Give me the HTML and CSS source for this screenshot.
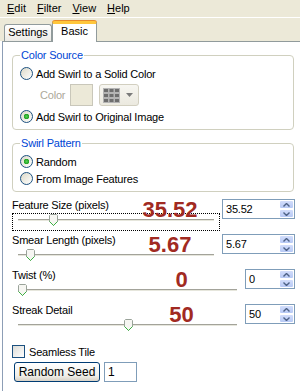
FILE: index.html
```html
<!DOCTYPE html>
<html lang="en">

<head>
    <meta charset="UTF-8">
    <meta name="viewport" content="width=device-width, initial-scale=1.0">
    <title>Swirl</title>
    <link rel="stylesheet" href="styles.css">
</head>

<body>
    <div class="window">
        <!-- 菜单 -->
        <div class="menubar">
            <span class="menu"><u>E</u>dit</span>
            <span class="menu"><u>F</u>ilter</span>
            <span class="menu"><u>V</u>iew</span>
            <span class="menu"><u>H</u>elp</span>
        </div>

        <!-- 选项卡 -->
        <div class="tabs">
            <div class="tab">Settings</div>
            <div class="tab tab-active">Basic</div>
        </div>

        <div class="panel">
            <fieldset class="group">
                <legend>Color Source</legend>
                <div class="radio"><span class="radio-box"></span>Add Swirl to a Solid Color</div>
                <div class="color-row">
                    <span class="color-label">Color</span>
                    <span class="swatch"></span>
                    <span class="picker">
                        <svg width="17" height="15" viewBox="0 0 17 15">
                            <rect width="17" height="15" fill="#b4b4b4" />
                            <rect x="1" y="1" width="4" height="3" fill="#6e6e6e" />
                            <rect x="6.5" y="1" width="4" height="3" fill="#6e6e6e" />
                            <rect x="12" y="1" width="4" height="3" fill="#6e6e6e" />
                            <rect x="1" y="6" width="4" height="3" fill="#6e6e6e" />
                            <rect x="6.5" y="6" width="4" height="3" fill="#6e6e6e" />
                            <rect x="12" y="6" width="4" height="3" fill="#6e6e6e" />
                            <rect x="1" y="11" width="4" height="3" fill="#6e6e6e" />
                            <rect x="6.5" y="11" width="4" height="3" fill="#6e6e6e" />
                            <rect x="12" y="11" width="4" height="3" fill="#6e6e6e" />
                        </svg>
                        <svg width="7" height="4" viewBox="0 0 7 4">
                            <path d="M0 0h7l-3.5 4z" fill="#7a7a7a" />
                        </svg>
                    </span>
                </div>
                <div class="radio"><span class="radio-box checked"></span>Add Swirl to Original Image</div>
            </fieldset>

            <fieldset class="group group-pattern">
                <legend>Swirl Pattern</legend>
                <div class="radio"><span class="radio-box checked"></span>Random</div>
                <div class="radio"><span class="radio-box"></span>From Image Features</div>
            </fieldset>

            <!-- 滑块 -->
            <div class="sliders">
                <div class="slider-row">
                    <div class="slider-area">
                        <div class="slider-label">Feature Size (pixels)</div>
                        <div class="slider focused">
                            <div class="track"></div>
                            <svg class="thumb" style="--pos:0.165" width="9" height="12" viewBox="0 0 9 12">
                                <path d="M1.5 .5h6l1 1v6l-4 4-4-4v-6z" fill="#f6f6f2" stroke="#9aa39a" />
                                <path d="M.5 7.5l4 4 4-4" fill="none" stroke="#3cb043" />
                            </svg>
                        </div>
                        <div class="big-value">35.52</div>
                    </div>
                    <div class="spin spin-wide">
                        <span class="spin-text">35.52</span>
                        <span class="spin-btns">
                            <span class="spin-btn"><svg width="7" height="4" viewBox="0 0 7 4"><path d="M.5 3.5l3-3 3 3" fill="none" stroke="#4d6185" stroke-width="1.4" /></svg></span>
                            <span class="spin-btn"><svg width="7" height="4" viewBox="0 0 7 4"><path d="M.5 .5l3 3 3-3" fill="none" stroke="#4d6185" stroke-width="1.4" /></svg></span>
                        </span>
                    </div>
                </div>

                <div class="slider-row">
                    <div class="slider-area">
                        <div class="slider-label">Smear Length (pixels)</div>
                        <div class="slider">
                            <div class="track"></div>
                            <svg class="thumb" style="--pos:0.043" width="9" height="12" viewBox="0 0 9 12">
                                <path d="M1.5 .5h6l1 1v6l-4 4-4-4v-6z" fill="#f6f6f2" stroke="#9aa39a" />
                                <path d="M.5 7.5l4 4 4-4" fill="none" stroke="#3cb043" />
                            </svg>
                        </div>
                        <div class="big-value">5.67</div>
                    </div>
                    <div class="spin spin-wide">
                        <span class="spin-text">5.67</span>
                        <span class="spin-btns">
                            <span class="spin-btn"><svg width="7" height="4" viewBox="0 0 7 4"><path d="M.5 3.5l3-3 3 3" fill="none" stroke="#4d6185" stroke-width="1.4" /></svg></span>
                            <span class="spin-btn"><svg width="7" height="4" viewBox="0 0 7 4"><path d="M.5 .5l3 3 3-3" fill="none" stroke="#4d6185" stroke-width="1.4" /></svg></span>
                        </span>
                    </div>
                </div>

                <div class="slider-row">
                    <div class="slider-area">
                        <div class="slider-label">Twist (%)</div>
                        <div class="slider">
                            <div class="track"></div>
                            <svg class="thumb" style="--pos:0" width="9" height="12" viewBox="0 0 9 12">
                                <path d="M1.5 .5h6l1 1v6l-4 4-4-4v-6z" fill="#f6f6f2" stroke="#9aa39a" />
                                <path d="M.5 7.5l4 4 4-4" fill="none" stroke="#3cb043" />
                            </svg>
                        </div>
                        <div class="big-value">0</div>
                    </div>
                    <div class="spin spin-narrow">
                        <span class="spin-text">0</span>
                        <span class="spin-btns">
                            <span class="spin-btn"><svg width="7" height="4" viewBox="0 0 7 4"><path d="M.5 3.5l3-3 3 3" fill="none" stroke="#4d6185" stroke-width="1.4" /></svg></span>
                            <span class="spin-btn"><svg width="7" height="4" viewBox="0 0 7 4"><path d="M.5 .5l3 3 3-3" fill="none" stroke="#4d6185" stroke-width="1.4" /></svg></span>
                        </span>
                    </div>
                </div>

                <div class="slider-row">
                    <div class="slider-area">
                        <div class="slider-label">Streak Detail</div>
                        <div class="slider">
                            <div class="track"></div>
                            <svg class="thumb" style="--pos:0.505" width="9" height="12" viewBox="0 0 9 12">
                                <path d="M1.5 .5h6l1 1v6l-4 4-4-4v-6z" fill="#f6f6f2" stroke="#9aa39a" />
                                <path d="M.5 7.5l4 4 4-4" fill="none" stroke="#3cb043" />
                            </svg>
                        </div>
                        <div class="big-value">50</div>
                    </div>
                    <div class="spin spin-narrow">
                        <span class="spin-text">50</span>
                        <span class="spin-btns">
                            <span class="spin-btn"><svg width="7" height="4" viewBox="0 0 7 4"><path d="M.5 3.5l3-3 3 3" fill="none" stroke="#4d6185" stroke-width="1.4" /></svg></span>
                            <span class="spin-btn"><svg width="7" height="4" viewBox="0 0 7 4"><path d="M.5 .5l3 3 3-3" fill="none" stroke="#4d6185" stroke-width="1.4" /></svg></span>
                        </span>
                    </div>
                </div>
            </div>

            <div class="check"><span class="check-box"></span>Seamless Tile</div>
            <div class="seed-row">
                <span class="button">Random Seed</span>
                <span class="textbox">1</span>
            </div>
        </div>
    </div>
</body>

</html>
```

FILE: styles.css
```css
* {
    box-sizing: border-box;
}

html,
body {
    margin: 0;
    padding: 0;
}

body {
    width: 300px;
    height: 392px;
    overflow: hidden;
    background: #fff;
    font-family: "Liberation Sans", Arial, sans-serif;
    font-size: 11px;
    letter-spacing: -0.2px;
    color: #000;
}

/* 菜单 */
.menubar {
    height: 18px;
    display: flex;
    padding-left: 1.5px;
    background: #ece9d8;
    border-bottom: 1px solid #fff;
    line-height: 17px;
    letter-spacing: 0;
}

.menu {
    padding: 0 5.5px;
}

/* 选项卡 */
.tabs {
    height: 23px;
    display: flex;
    align-items: flex-end;
    padding-left: 4px;
    background: #ece9d8;
}

.tab {
    width: 48px;
    height: 17px;
    text-align: center;
    line-height: 15px;
    border: 1px solid #919b9c;
    border-bottom: 0;
    border-radius: 3px 3px 0 0;
    background: linear-gradient(#fff, #ecebe6);
    letter-spacing: 0;
}

.tab-active {
    position: relative;
    width: 45px;
    height: 21px;
    margin-bottom: -1px;
    background: #fff;
    border-top: 3px solid #ffc73c;
    box-shadow: 0 -1px 0 #e68b2c;
    line-height: 15px;
}

.panel {
    margin-left: 2px;
    padding: 7px 5px 0 9px;
    border-top: 1px solid #919b9c;
    border-left: 1px solid #8d9eb6;
    height: 350px;
}

/* 分组框 */
.group {
    margin: 0 1px 0 0;
    padding: 3px 0 4px 7px;
    min-width: 0;
    border: 1px solid #d0d0bf;
    border-radius: 4px;
}

.group legend {
    padding: 0 1px;
    color: #0046d5;
    line-height: 13px;
}

.group-pattern {
    margin-top: 7px;
}

.radio,
.check {
    height: 17px;
    display: flex;
    align-items: center;
    gap: 3px;
}

.radio-box {
    width: 13px;
    height: 13px;
    border: 1px solid #1c5180;
    border-radius: 50%;
    background: linear-gradient(135deg, #dcd9c8, #fff);
}

.radio-box.checked {
    background: radial-gradient(circle, #55d155 0, #21a121 2.5px, transparent 3px),
        linear-gradient(135deg, #dcd9c8, #fff);
}

.color-row {
    height: 22px;
    margin: 2px 0;
    display: flex;
    align-items: center;
    padding-left: 20px;
}

.color-label {
    width: 30px;
    color: #aca899;
}

.swatch {
    width: 23px;
    height: 22px;
    border: 1px solid #c9c7ba;
    background: #ece9d8;
}

.picker {
    width: 40px;
    height: 22px;
    margin-left: 6px;
    display: flex;
    align-items: center;
    gap: 6px;
    padding-left: 3px;
    border: 1px solid #d2cfc0;
    border-radius: 3px;
    background: linear-gradient(#f7f6f1, #ebe9df);
}

/* 滑块 */
.sliders {
    margin-top: 7px;
    display: flex;
    flex-direction: column;
    gap: 2px;
}

.slider-row {
    height: 33px;
    display: grid;
    grid-template-columns: 1fr auto;
    column-gap: 2px;
    align-items: start;
}

.slider-area {
    position: relative;
}

.slider-label {
    height: 13px;
    line-height: 13px;
}

.slider {
    position: relative;
    height: 18px;
    margin-top: 1px;
    padding-top: 6px;
}

.slider.focused {
    outline: 1px dotted #000;
    outline-offset: -1px;
}

.track {
    height: 2px;
    margin: 0 6px;
    border-top: 1px solid #a3a39a;
    background: #e6e6dc;
}

.thumb {
    position: absolute;
    top: 1px;
    left: calc(6px + (100% - 21px) * var(--pos));
}

.big-value {
    position: absolute;
    top: 0;
    left: calc(50% + 54px);
    transform: translateX(-50%);
    font-size: 22px;
    line-height: 22px;
    font-weight: bold;
    letter-spacing: 0;
    color: #a12a22;
}

.spin {
    height: 20px;
    display: flex;
    border: 1px solid #7f9db9;
    background: #fff;
}

.spin-wide {
    width: 73px;
}

.spin-narrow {
    width: 50px;
}

.spin-text {
    flex: 1;
    padding-left: 3px;
    line-height: 18px;
}

.spin-btns {
    width: 15px;
    display: flex;
    flex-direction: column;
}

.spin-btn {
    flex: 1;
    display: flex;
    align-items: center;
    justify-content: center;
    border: 1px solid #fff;
    border-radius: 2px;
    background: linear-gradient(#d2ddfb, #b7c9f5);
}

/* 底部 */
.check {
    height: 13px;
    margin-top: 8px;
    gap: 4px;
}

.check-box {
    width: 13px;
    height: 13px;
    border: 1px solid #1c5180;
    background: linear-gradient(135deg, #dcdcd7, #fff);
}

.seed-row {
    margin-top: 4px;
    padding-left: 2px;
    display: flex;
    gap: 4px;
}

.button {
    width: 86px;
    height: 20px;
    line-height: 18px;
    text-align: center;
    border: 1px solid #003c74;
    border-radius: 3px;
    background: linear-gradient(#fff, #f0efea 70%, #d8d2c6);
    font-size: 12px;
    letter-spacing: 0;
}

.textbox {
    width: 33px;
    height: 20px;
    padding-left: 3px;
    line-height: 18px;
    border: 1px solid #7f9db9;
    font-size: 12px;
}
```
